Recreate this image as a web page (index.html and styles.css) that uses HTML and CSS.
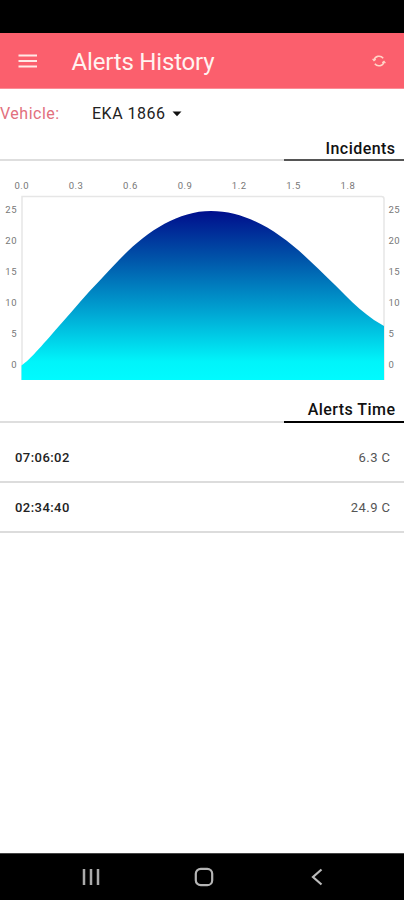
FILE: index.html
```
<!DOCTYPE html>
<html lang="en">
<head>
<meta charset="utf-8">
<title>Alerts History</title>
<link rel="stylesheet" href="styles.css">
</head>
<body>
<div class="status"></div>
<header class="appbar">
  <svg class="menu" width="20" height="16" viewBox="0 0 20 16"><path d="M.5 2.500h18.500M.5 8h18.500M.5 13.500h18.500" stroke="#ffe9e6" stroke-width="1.800"/></svg>
  <h1>Alerts History</h1>
  <svg class="sync" width="14" height="14" viewBox="0 0 14 14" fill="none" stroke="#ffd5c8" stroke-width="1.500"><path d="M2 6.200A5.200 5.200 0 0 1 11.200 4.200M12 7.800A5.200 5.200 0 0 1 2.800 9.800"/><path d="M.6 4.900L2 6.600L3.800 5.200M13.400 9.100L12 7.400L10.200 8.800" stroke-width="1.200"/></svg>
</header>
<main>
  <div class="vehicle">
    <span class="label">Vehicle:</span>
    <span class="value">EKA 1866</span>
    <svg width="10" height="6" viewBox="0 0 10 6"><path d="M.5.5h9L5 5.300z" fill="#111"/></svg>
  </div>
  <div class="section first"><h2>Incidents</h2></div>
  <svg class="chart" width="404" height="225" viewBox="0 165 404 225">
    <defs>
      <linearGradient id="depth" gradientUnits="userSpaceOnUse" x1="0" y1="211" x2="0" y2="380">
        <stop offset="0" stop-color="#000e8c"/>
        <stop offset=".29" stop-color="#0056aa"/>
        <stop offset=".58" stop-color="#00a0d0"/>
        <stop offset=".89" stop-color="#00f4fa"/>
        <stop offset="1" stop-color="#00fbff"/>
      </linearGradient>
    </defs>
    <path class="frame" d="M22 380V196.500H381.500Q384 196.500 384 199V380"/>
    <path fill="url(#depth)" d="M21.500 365.500C30 360 45 342 61.700 323C68 316 74 309 80 302C93 287 106 274 119 260C146 232 177 211 211 211C247 211 280 232 309 260C322 272 334 284 345 295C355 305 364 313 374 320L384 326V380H21.500Z"/>
    <g class="x">
      <text x="21.800" y="189">0.0</text><text x="76" y="189">0.3</text><text x="130.400" y="189">0.6</text><text x="185" y="189">0.9</text><text x="239.200" y="189">1.2</text><text x="293.500" y="189">1.5</text><text x="347.900" y="189">1.8</text>
    </g>
    <g class="left">
      <text x="17" y="213">25</text><text x="17" y="244">20</text><text x="17" y="275">15</text><text x="17" y="306">10</text><text x="17" y="337">5</text><text x="17" y="368">0</text>
    </g>
    <g class="right">
      <text x="388.500" y="213">25</text><text x="388.500" y="244">20</text><text x="388.500" y="275">15</text><text x="388.500" y="306">10</text><text x="388.500" y="337">5</text><text x="388.500" y="368">0</text>
    </g>
  </svg>
  <div class="section second"><h2>Alerts Time</h2></div>
  <div class="row tall"><b>07:06:02</b><span>6.3 C</span></div>
  <div class="row"><b>02:34:40</b><span>24.9 C</span></div>
</main>
<nav class="navbar">
  <svg width="18" height="18" viewBox="0 0 18 18"><path d="M2 1v16M9 1v16M16 1v16" stroke="#aaa" stroke-width="2.500"/></svg>
  <svg width="20" height="20" viewBox="0 0 20 20"><rect x="1.800" y="1.800" width="16.400" height="16.400" rx="5" fill="none" stroke="#b5b5b5" stroke-width="2.200"/></svg>
  <svg width="12" height="18" viewBox="0 0 12 18"><path d="M10.500 1.500L2 9l8.500 7.500" fill="none" stroke="#bbb" stroke-width="2.200"/></svg>
</nav>
</body>
</html>
```
FILE: styles.css
```
* { box-sizing: border-box; }
body {
  margin: 0;
  height: 900px;
  display: flex;
  flex-direction: column;
  overflow: hidden;
  background: #fff;
  font-family: Roboto, sans-serif;
}
svg { display: block; flex: none; }
.status { height: 33px; background: #000; }
.appbar {
  height: 56px;
  display: flex;
  align-items: center;
  padding: 0 18px;
  background: #fb5f6d;
  border-bottom: 1px solid #fc8d96;
}
.appbar h1 {
  flex: 1;
  margin: 3px 0 0 33.500px;
  font-size: 24px;
  letter-spacing: -.18px;
  font-weight: 400;
  line-height: 30px;
  color: #fff3f0;
}
main { flex: 1; }
.vehicle {
  height: 49px;
  display: flex;
  align-items: center;
  font-size: 16px;
}
.vehicle .label { width: 92px; letter-spacing: .5px; color: #e2707d; }
.vehicle .value { width: 80px; letter-spacing: .5px; color: #222; white-space: nowrap; }
.section {
  display: flex;
  justify-content: flex-end;
  background: linear-gradient(#dedede, #dedede) bottom / 100% 2px no-repeat;
}
.section h2 {
  width: 120.500px;
  margin: 0;
  padding-right: 8.500px;
  border-bottom: 2px solid #555;
  font-size: 16px;
  font-weight: 500;
  letter-spacing: .45px;
  line-height: 21px;
  text-align: right;
  color: #111;
}
.first { height: 23px; }
.chart { margin-top: 4px; }
.second { height: 23px; margin-top: 10px; }
.second h2 { line-height: 20px; border-color: #000; }
.frame { fill: none; stroke: #e6e6e6; stroke-width: 1.500; }
.chart text { font-size: 9.500px; letter-spacing: .5px; fill: #777; }
.x { text-anchor: middle; }
.left { text-anchor: end; }
.row {
  height: 50px;
  display: flex;
  align-items: center;
  justify-content: space-between;
  padding: 1px 13.500px 0 15px;
  border-bottom: 2px solid #dcdcdc;
  font-size: 13px;
  letter-spacing: .45px;
  color: #555;
}
.row b { font-weight: 500; color: #222; }
.tall { height: 60px; padding-top: 11px; }
.navbar {
  height: 47px;
  display: flex;
  align-items: center;
  justify-content: space-between;
  padding: 0 81px 1px 82px;
  background: #000;
  border-top: 1px solid #444;
}
.navbar svg:nth-child(2) { margin-right: 3px; }
```
